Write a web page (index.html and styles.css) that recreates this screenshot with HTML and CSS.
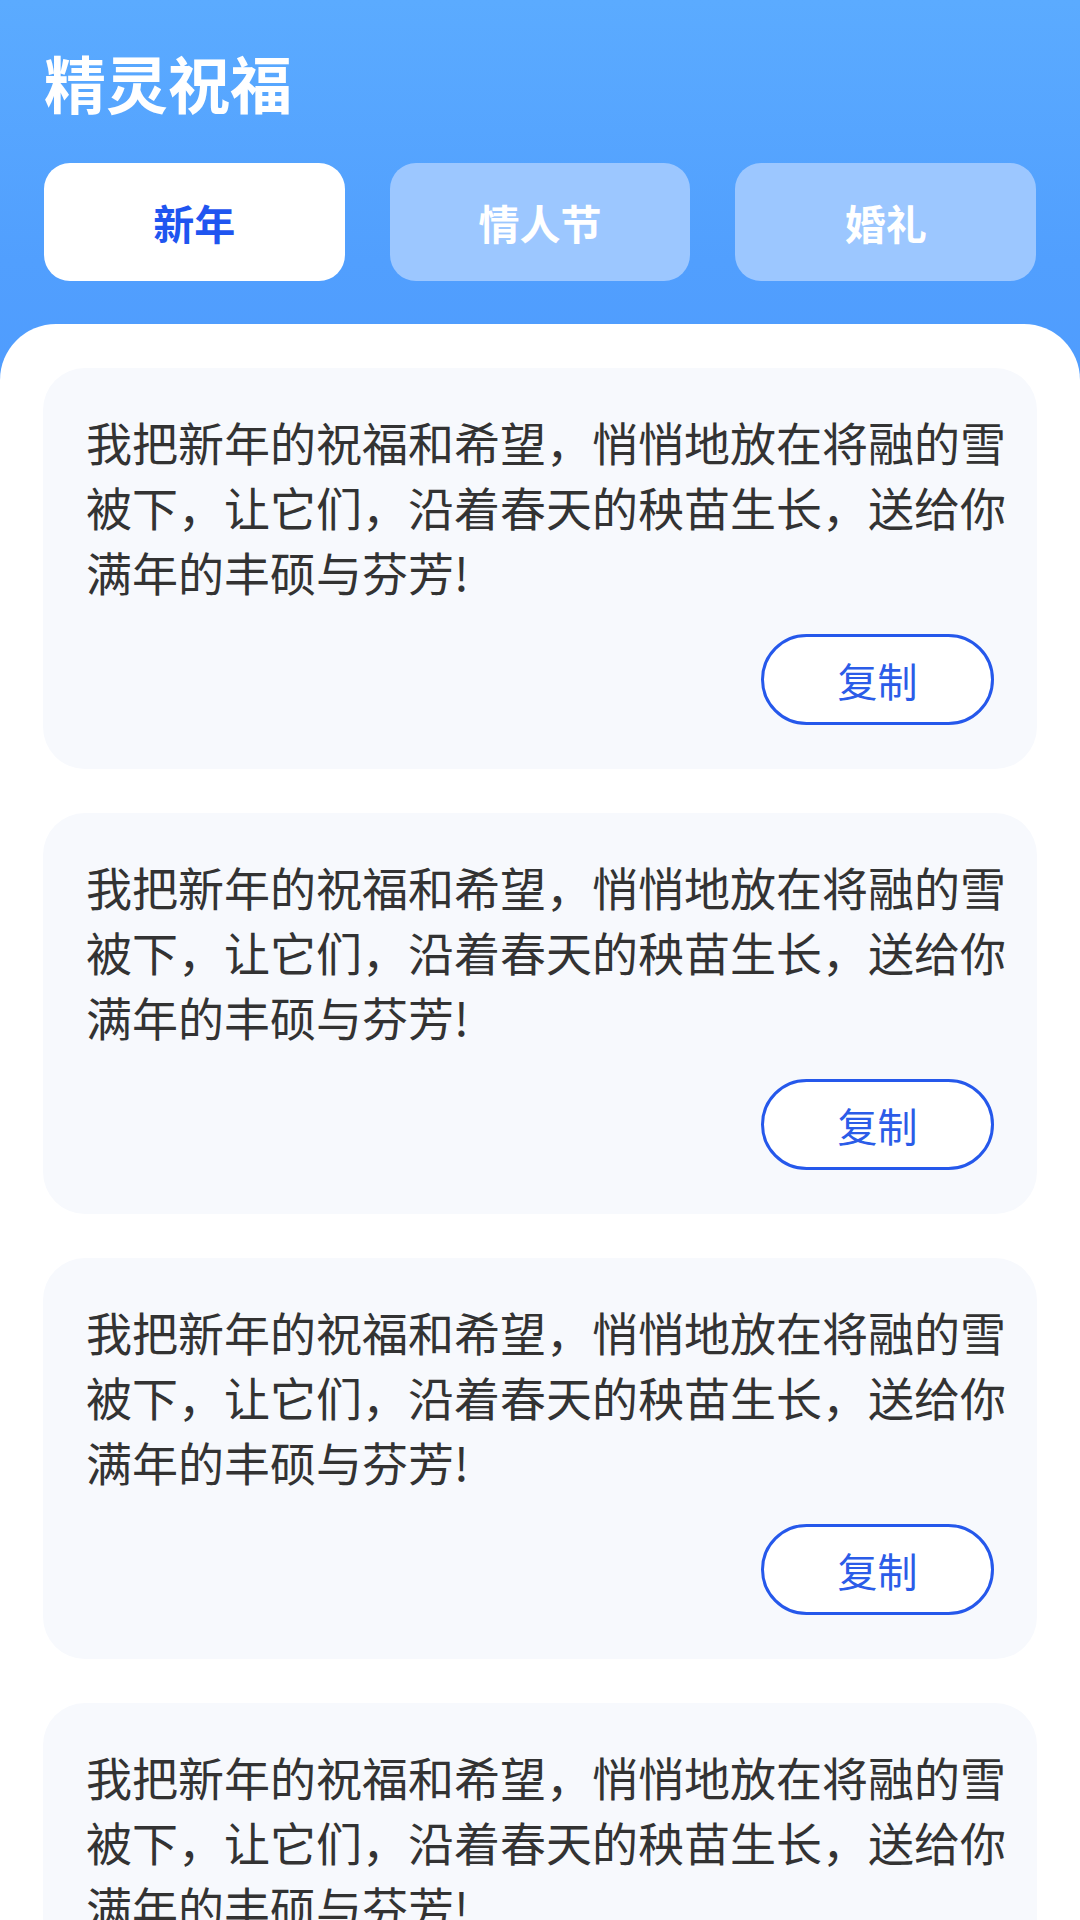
FILE: index.html
```html
<!DOCTYPE html>
<html lang="zh-CN">
<head>
  <meta charset="UTF-8" />
  <meta name="viewport" content="width=device-width, initial-scale=1.0"/>
  <title>精灵祝福</title>
  <link rel="stylesheet" href="styles.css">
</head>
<body>
  <header class="top">
    <h1 class="title">精灵祝福</h1>
    <nav class="tabs">
      <div class="tab active">新年</div>
      <div class="tab">情人节</div>
      <div class="tab">婚礼</div>
    </nav>
  </header>

  <main class="panel">
    <div class="card">
      <p class="card-text">我把新年的祝福和希望，悄悄地放在将融的雪被下，让它们，沿着春天的秧苗生长，送给你满年的丰硕与芬芳!</p>
      <div class="card-foot"><button class="copy-btn">复制</button></div>
    </div>
    <div class="card">
      <p class="card-text">我把新年的祝福和希望，悄悄地放在将融的雪被下，让它们，沿着春天的秧苗生长，送给你满年的丰硕与芬芳!</p>
      <div class="card-foot"><button class="copy-btn">复制</button></div>
    </div>
    <div class="card">
      <p class="card-text">我把新年的祝福和希望，悄悄地放在将融的雪被下，让它们，沿着春天的秧苗生长，送给你满年的丰硕与芬芳!</p>
      <div class="card-foot"><button class="copy-btn">复制</button></div>
    </div>
    <div class="card">
      <p class="card-text">我把新年的祝福和希望，悄悄地放在将融的雪被下，让它们，沿着春天的秧苗生长，送给你满年的丰硕与芬芳!</p>
      <div class="card-foot"><button class="copy-btn">复制</button></div>
    </div>
  </main>
</body>
</html>
```

FILE: styles.css
```css
body {
  font-family: "Noto Sans CJK SC", "Noto Sans", sans-serif;
  margin: 0;
  padding: 0;
  height: 1920px;
  overflow: hidden;
  background: linear-gradient(to bottom, #5babff 0px, #519ffe 260px, #4f9cfe 400px);
  color: #333;
}

.top {
  padding: 51px 44px 43px 44px;
}

.title {
  margin: 0;
  font-size: 62px;
  line-height: 62px;
  font-weight: 700;
  color: #fff;
}

.tabs {
  display: grid;
  grid-template-columns: repeat(3, 1fr);
  gap: 45px;
  margin-top: 50px;
}

.tab {
  height: 118px;
  display: flex;
  align-items: center;
  justify-content: center;
  border-radius: 26px;
  background-color: #9cc7ff;
  color: #fff;
  font-size: 41px;
  font-weight: 700;
}

.tab.active {
  background-color: #fff;
  color: #1f55f0;
}

.panel {
  background-color: #fff;
  border-radius: 56px 56px 0 0;
  padding: 44px 43px;
  display: flex;
  flex-direction: column;
  gap: 44px;
  min-height: 1600px;
}

.card {
  background-color: #f7f9fd;
  border-radius: 42px;
  padding: 41px 28px 44px 43px;
}

.card-text {
  margin: 0;
  font-size: 46px;
  line-height: 65px;
  color: #333;
}

.card-foot {
  display: flex;
  justify-content: flex-end;
  margin-top: 30px;
  padding-right: 15px;
}

.copy-btn {
  width: 233px;
  height: 91px;
  border: 3px solid #2558eb;
  border-radius: 46px;
  background-color: #fff;
  color: #2b5ce8;
  font-family: "Noto Sans CJK SC", "Noto Sans", sans-serif;
  font-size: 40px;
  padding: 0;
}
```
